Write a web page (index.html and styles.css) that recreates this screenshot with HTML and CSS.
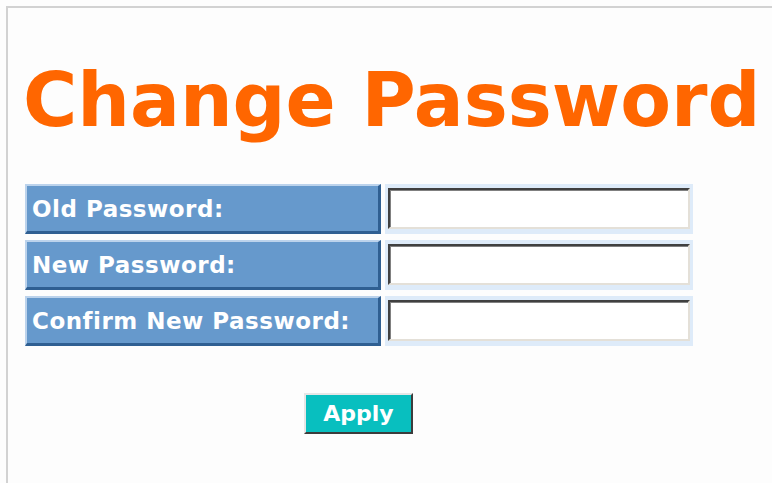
FILE: index.html
```html
<!DOCTYPE html>
<html lang="en">
<head>
<meta charset="utf-8">
<title>Change Password</title>
<link rel="stylesheet" href="styles.css">
</head>
<body>
<div class="frame">
  <h1 class="title">Change Password</h1>
  <form class="pw-form">
    <div class="pw-grid">
      <label class="pw-label" for="old">Old Password:</label>
      <div class="pw-field"><input class="pw-input" id="old" type="password"></div>
      <label class="pw-label" for="new">New Password:</label>
      <div class="pw-field"><input class="pw-input" id="new" type="password"></div>
      <label class="pw-label" for="confirm">Confirm New Password:</label>
      <div class="pw-field"><input class="pw-input" id="confirm" type="password"></div>
    </div>
    <div class="actions">
      <button class="apply" type="button">Apply</button>
    </div>
  </form>
</div>
</body>
</html>
```

FILE: styles.css
```css
html, body {
  margin: 0;
  padding: 0;
  background: #fdfdfd;
  height: 100%;
  overflow: hidden;
}

body {
  font-family: "DejaVu Sans", Verdana, sans-serif;
}

/* page frame: grey rule along the top and left */
.frame {
  margin: 6px 0 0 6px;
  height: 100%;
  border-top: 2px solid #d2d2d2;
  border-left: 2px solid #d2d2d2;
  box-sizing: border-box;
}

.title {
  margin: 49px 0 0 15px;
  font-size: 74px;
  font-weight: bold;
  color: #ff6600;
  line-height: normal;
  white-space: nowrap;
}

.pw-form {
  margin: 41px 0 0 17px;
  width: 668px;
}

.pw-grid {
  display: grid;
  grid-template-columns: 356px 308px;
  grid-auto-rows: 50px;
  column-gap: 4px;
  row-gap: 6px;
}

.pw-label {
  display: flex;
  align-items: center;
  box-sizing: border-box;
  padding-left: 5px;
  background: #6699cc;
  border-style: solid;
  border-width: 2px 3px 3px 2px;
  border-color: #bcd3ec #2f5f92 #2f5f92 #bcd3ec;
  color: #ffffff;
  font-size: 23px;
  font-weight: bold;
  letter-spacing: 0.5px;
  white-space: nowrap;
}

.pw-field {
  box-sizing: border-box;
  padding: 4px 3px 5px 3px;
  background: #deebf9;
}

.pw-input {
  display: block;
  box-sizing: border-box;
  width: 100%;
  height: 100%;
  margin: 0;
  padding: 0 4px;
  background: #ffffff;
  border-style: solid;
  border-width: 2px;
  border-color: #404040 #e4e0d8 #e4e0d8 #404040;
  box-shadow: inset 1px 1px 0 #808080;
  font-size: 18px;
  outline: none;
}

.actions {
  display: flex;
  justify-content: center;
  margin-top: 47px;
}

.apply {
  width: 109px;
  height: 41px;
  margin: 0 0 0 -1px;
  padding: 0;
  background: #08bfbf;
  border-style: solid;
  border-width: 2px;
  border-color: #e6e6e6 #3c3c3c #3c3c3c #e6e6e6;
  color: #ffffff;
  font-family: "DejaVu Sans", Verdana, sans-serif;
  font-size: 22px;
  font-weight: bold;
  cursor: pointer;
}
```
